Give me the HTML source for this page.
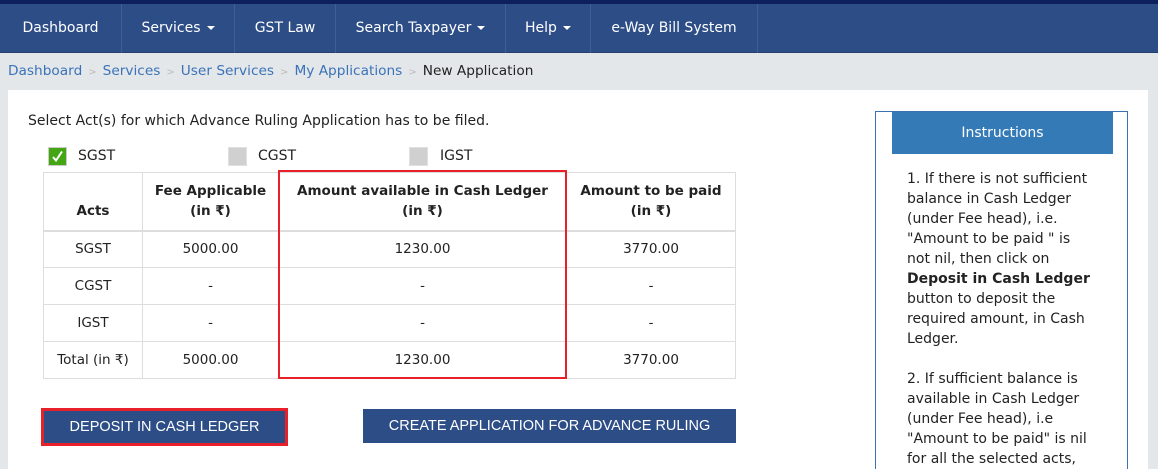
<!DOCTYPE html>
<html style="overflow:hidden;width:1158px;height:469px"><head><meta charset="utf-8"><style>
*{margin:0;padding:0;box-sizing:border-box}
body{width:1158px;height:469px;overflow:hidden;background:#e4e7ea;font-family:"DejaVu Sans",Verdana,sans-serif;font-size:13.5px;color:#222;position:relative}
.top{position:absolute;left:0;top:0;width:1158px;height:4px;background:#0d1f5c}
.nav{position:absolute;left:0;top:4px;width:1158px;height:49px;background:#2c4d86;border-bottom:1px solid #24406f}
.nav div{position:absolute;top:0;height:49px;line-height:49px;color:#fff;font-size:14px;text-align:center;border-right:1px solid #3e5f96}
.car{display:inline-block;width:0;height:0;border-left:4px solid transparent;border-right:4px solid transparent;border-top:4px solid #fff;vertical-align:middle;margin-left:6px}
.bc{position:absolute;top:63px;left:8px;font-size:13.7px;color:#3a73b8}
.bc span.s{color:#bbb;margin:0 6px;font-size:10px}
.main{position:absolute;left:8px;top:90px;width:1140px;height:379px;background:#fff}
.a{position:absolute}
.cb{position:absolute;width:19px;height:19px;background:#d0d0d0;border:1px solid #e0e0e0}
table{position:absolute;left:43px;top:172px;border-collapse:collapse;width:693px}
td,th{border:1px solid #ddd;text-align:center;font-size:13.5px;height:37px}
th{font-weight:bold;height:58px;vertical-align:middle;border-bottom:2px solid #ddd;line-height:20px}
.btn{position:absolute;background:#2c4d86;color:#fff;font-family:"Liberation Sans",Arial,sans-serif;font-size:14.5px;text-align:center}
.ins{position:absolute;left:875px;top:111px;width:253px;height:370px;border:1px solid #3a73b0}
.insh{position:absolute;left:16px;top:0;width:221px;height:42px;background:#337ab7;color:#fff;text-align:center;line-height:42px;font-size:14px}
.inst{position:absolute;left:31px;top:57px;width:200px;font-size:14px;line-height:20px;color:#222}
</style></head><body>
<div class="top"></div>
<div class="nav">
<div style="left:0;width:122px">Dashboard</div>
<div style="left:122px;width:113px">Services<span class="car"></span></div>
<div style="left:235px;width:101px">GST Law</div>
<div style="left:336px;width:170px">Search Taxpayer<span class="car"></span></div>
<div style="left:506px;width:85px">Help<span class="car"></span></div>
<div style="left:591px;width:167px">e-Way Bill System</div>
</div>
<div class="bc">Dashboard<span class="s">&gt;</span>Services<span class="s">&gt;</span>User Services<span class="s">&gt;</span>My Applications<span class="s">&gt;</span><span style="color:#222">New Application</span></div>
<div class="main"></div>
<div class="a" style="left:28px;top:113px;font-size:14px">Select Act(s) for which Advance Ruling Application has to be filed.</div>
<div class="cb" style="left:48px;top:147px;background:#44a612;border-color:#ccc"><svg width="17" height="17" viewBox="0 0 17 17"><path d="M4 9 L7 12.5 L13 3.5" stroke="#fff" stroke-width="2" fill="none"/></svg></div>
<div class="a" style="left:78px;top:148px;font-size:14px">SGST</div>
<div class="cb" style="left:228px;top:147px"></div>
<div class="a" style="left:258px;top:148px;font-size:14px">CGST</div>
<div class="cb" style="left:409px;top:147px"></div>
<div class="a" style="left:440px;top:148px;font-size:14px">IGST</div>
<table>
<tr><th style="width:99px;vertical-align:bottom;padding-bottom:9px">Acts</th><th style="width:136px">Fee Applicable<br>(in ₹)</th><th style="width:288px">Amount available in Cash Ledger<br>(in ₹)</th><th>Amount to be paid<br>(in ₹)</th></tr>
<tr><td>SGST</td><td>5000.00</td><td>1230.00</td><td>3770.00</td></tr>
<tr><td>CGST</td><td>-</td><td>-</td><td>-</td></tr>
<tr><td>IGST</td><td>-</td><td>-</td><td>-</td></tr>
<tr><td>Total (in ₹)</td><td>5000.00</td><td>1230.00</td><td>3770.00</td></tr>
</table>
<div class="a" style="left:278px;top:170px;width:289px;height:209px;border:2px solid #e8202a"></div>
<div class="btn" style="left:41px;top:408px;width:247px;height:38px;border:3px solid #e8202a;line-height:32px">DEPOSIT IN CASH LEDGER</div>
<div class="btn" style="left:363px;top:409px;width:373px;height:34px;line-height:34px">CREATE APPLICATION FOR ADVANCE RULING</div>
<div class="ins"><div class="insh">Instructions</div>
<div class="inst">1. If there is not sufficient<br>balance in Cash Ledger<br>(under Fee head), i.e.<br>"Amount to be paid " is<br>not nil, then click on<br><b>Deposit in Cash Ledger</b><br>button to deposit the<br>required amount, in Cash<br>Ledger.<br><br>2. If sufficient balance is<br>available in Cash Ledger<br>(under Fee head), i.e<br>"Amount to be paid" is nil<br>for all the selected acts,</div></div>
</body></html>
